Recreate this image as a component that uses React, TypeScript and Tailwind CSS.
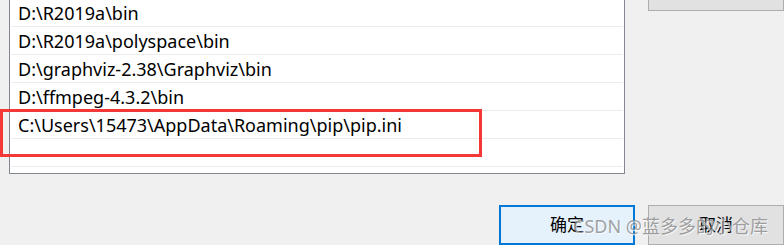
import React from "react";

const rows = [
  "D:\\R2019a\\bin",
  "D:\\R2019a\\polyspace\\bin",
  "D:\\graphviz-2.38\\Graphviz\\bin",
  "D:\\ffmpeg-4.3.2\\bin",
  "C:\\Users\\15473\\AppData\\Roaming\\pip\\pip.ini",
  "",
];

export default function App() {
  return (
    <div
      className="relative w-[784px] h-[245px] overflow-hidden bg-[#f0f0f0] flex flex-col"
      style={{ fontFamily: '"Noto Sans", "Noto Sans CJK SC", sans-serif' }}
    >
      <div className="flex flex-row items-start">
        <div className="ml-[9px] mt-[-2px] w-[616px] h-[176px] border border-[#828790] bg-white flex flex-col">
          {rows.map((r, i) => (
            <div
              key={i}
              className="h-[28px] shrink-0 border-b border-[#ebebeb] ml-px mr-px pl-[7px] flex items-center text-[18px] leading-none text-black whitespace-nowrap"
            >
              {r}
            </div>
          ))}
        </div>
        <div className="ml-[23px] mt-[-24px] w-[136px] h-[35px] border border-[#adadad] bg-[#e1e1e1]" />
      </div>
      <div className="mt-[31px] flex flex-row justify-end gap-[13px]">
        <div className="w-[136px] h-[40px] border-2 border-[#0078d7] bg-[#e5f1fb] flex items-center justify-center text-[17px] text-black">
          确定
        </div>
        <div className="w-[136px] h-[40px] border border-[#adadad] bg-[#e1e1e1] flex items-center justify-center text-[17px] text-black">
          取消
        </div>
      </div>
      <div className="absolute left-0 top-[109px] w-[482px] h-[48px] border-[3px] border-[#f43838]" />
      <div
        className="absolute left-[573px] top-[213px] text-[18px] leading-[26px] text-[#8a8a8a]/80 whitespace-nowrap"
        style={{ textShadow: "1px 1px 1px rgba(255,255,255,0.8)" }}
      >
        CSDN @蓝多多的小仓库
      </div>
    </div>
  );
}
